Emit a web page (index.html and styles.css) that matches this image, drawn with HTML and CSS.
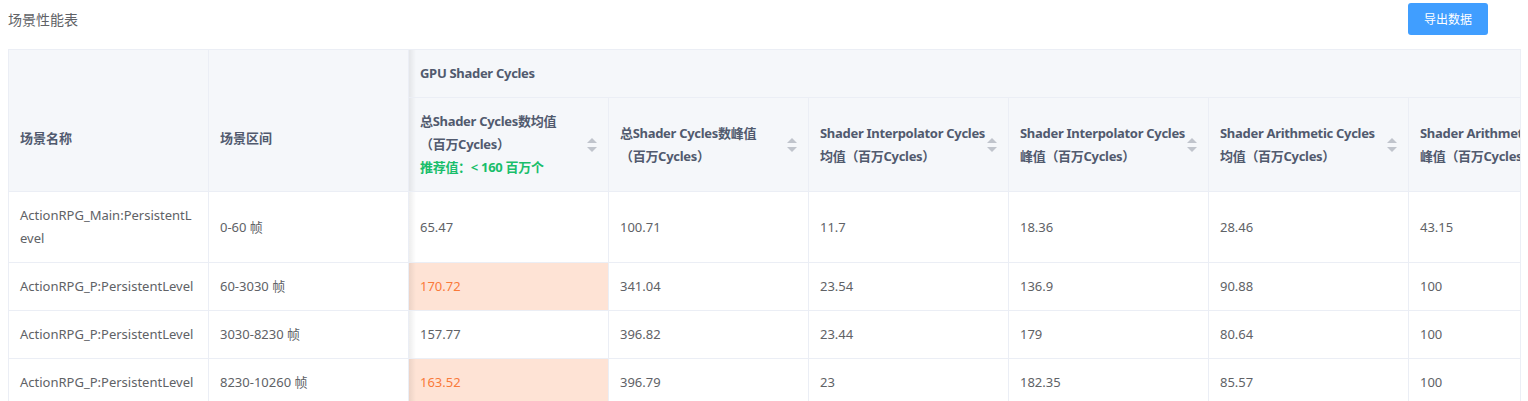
FILE: index.html
```html
<!DOCTYPE html>
<html lang="zh-CN">
<head>
<meta charset="utf-8">
<title>场景性能表</title>
<link rel="stylesheet" href="styles.css">
</head>
<body>
<div class="page">
  <div class="toolbar">
    <span class="title">场景性能表</span>
    <button class="btn-primary">导出数据</button>
  </div>
  <div class="table-wrap">
    <table class="perf">
      <colgroup>
        <col class="c"><col class="c"><col class="c"><col class="c"><col class="c"><col class="c"><col class="c"><col class="c"><col class="c">
      </colgroup>
      <thead>
        <tr class="h1">
          <th rowspan="2" class="fixed-h"><div class="cell">场景名称</div></th>
          <th rowspan="2" class="fixed-h"><div class="cell">场景区间</div></th>
          <th colspan="7" class="sh"><div class="cell">GPU Shader Cycles</div></th>
        </tr>
        <tr class="h2">
          <th class="sh"><div class="cell sortable"><span class="lbl">总Shader Cycles数均值<br>（百万Cycles）<br><span class="rec">推荐值：&lt; 160 百万个</span></span><span class="caret"><i class="up"></i><i class="down"></i></span></div></th>
          <th><div class="cell sortable"><span class="lbl">总Shader Cycles数峰值<br>（百万Cycles）</span><span class="caret"><i class="up"></i><i class="down"></i></span></div></th>
          <th><div class="cell sortable"><span class="lbl">Shader Interpolator Cycles<br>均值（百万Cycles）</span><span class="caret"><i class="up"></i><i class="down"></i></span></div></th>
          <th><div class="cell sortable"><span class="lbl">Shader Interpolator Cycles<br>峰值（百万Cycles）</span><span class="caret"><i class="up"></i><i class="down"></i></span></div></th>
          <th><div class="cell sortable"><span class="lbl">Shader Arithmetic Cycles<br>均值（百万Cycles）</span><span class="caret"><i class="up"></i><i class="down"></i></span></div></th>
          <th><div class="cell sortable"><span class="lbl">Shader Arithmetic Cycles<br>峰值（百万Cycles）</span><span class="caret"><i class="up"></i><i class="down"></i></span></div></th>
          <th><div class="cell sortable"><span class="lbl">Shader Load Store Cycles<br>均值（百万Cycles）</span><span class="caret"><i class="up"></i><i class="down"></i></span></div></th>
        </tr>
      </thead>
      <tbody>
        <tr>
          <td><div class="cell">ActionRPG_Main:PersistentL<br>evel</div></td>
          <td><div class="cell">0-60 帧</div></td>
          <td class="sh"><div class="cell">65.47</div></td>
          <td><div class="cell">100.71</div></td>
          <td><div class="cell">11.7</div></td>
          <td><div class="cell">18.36</div></td>
          <td><div class="cell">28.46</div></td>
          <td><div class="cell">43.15</div></td>
          <td><div class="cell">12.3</div></td>
        </tr>
        <tr>
          <td><div class="cell">ActionRPG_P:PersistentLevel</div></td>
          <td><div class="cell">60-3030 帧</div></td>
          <td class="sh warn"><div class="cell">170.72</div></td>
          <td><div class="cell">341.04</div></td>
          <td><div class="cell">23.54</div></td>
          <td><div class="cell">136.9</div></td>
          <td><div class="cell">90.88</div></td>
          <td><div class="cell">100</div></td>
          <td><div class="cell">30.1</div></td>
        </tr>
        <tr>
          <td><div class="cell">ActionRPG_P:PersistentLevel</div></td>
          <td><div class="cell">3030-8230 帧</div></td>
          <td class="sh"><div class="cell">157.77</div></td>
          <td><div class="cell">396.82</div></td>
          <td><div class="cell">23.44</div></td>
          <td><div class="cell">179</div></td>
          <td><div class="cell">80.64</div></td>
          <td><div class="cell">100</div></td>
          <td><div class="cell">28.9</div></td>
        </tr>
        <tr>
          <td><div class="cell">ActionRPG_P:PersistentLevel</div></td>
          <td><div class="cell">8230-10260 帧</div></td>
          <td class="sh warn"><div class="cell">163.52</div></td>
          <td><div class="cell">396.79</div></td>
          <td><div class="cell">23</div></td>
          <td><div class="cell">182.35</div></td>
          <td><div class="cell">85.57</div></td>
          <td><div class="cell">100</div></td>
          <td><div class="cell">29.4</div></td>
        </tr>
      </tbody>
    </table>
  </div>
</div>
</body>
</html>
```

FILE: styles.css
```css
* { box-sizing: border-box; }
html, body { margin: 0; padding: 0; background: #fff; }
body {
  font-family: "Noto Sans", "Noto Sans CJK SC", sans-serif;
  font-size: 13px;
  color: #606266;
}
.page { padding: 0 7px 0 8px; height: 401px; overflow: hidden; }
.toolbar {
  height: 38px;
  display: flex;
  align-items: center;
  justify-content: space-between;
  padding-right: 33px;
  margin-bottom: 11px;
}
.title { font-size: 14px; color: #606266; }
.btn-primary {
  width: 80px;
  height: 32px;
  border: none;
  border-radius: 3px;
  background: #409eff;
  color: #fff;
  font-family: inherit;
  font-size: 12px;
  padding: 0;
}
.table-wrap {
  width: 1513px;
  overflow: hidden;
  border-left: 1px solid #ebeef5;
  border-top: 1px solid #ebeef5;
  border-right: 1px solid #ebeef5;
}
.perf {
  border-collapse: separate;
  border-spacing: 0;
  table-layout: fixed;
  width: 1800px;
}
.perf col.c { width: 200px; }
.perf th, .perf td {
  padding: 12px 0;
  border-right: 1px solid #ebeef5;
  border-bottom: 1px solid #ebeef5;
  vertical-align: middle;
  text-align: left;
}
.perf th {
  background: #f5f7fa;
  color: #515a6e;
  font-weight: 700;
  letter-spacing: -0.3px;
}
.perf th.fixed-h { vertical-align: bottom; padding-bottom: 41px; letter-spacing: 0; }
.perf td { background: #fff; color: #606266; font-weight: 400; }
.cell {
  line-height: 23px;
  padding: 0 10px 0 11px;
  word-break: break-all;
}
.sortable { display: flex; align-items: center; }
.sortable .lbl { flex: 1; min-width: 0; white-space: nowrap; }
.caret {
  flex: none;
  width: 10px;
  height: 14px;
  margin-right: 1px;
  margin-left: 2px;
  display: flex;
  flex-direction: column;
  justify-content: space-between;
  align-items: center;
}
.caret i {
  display: block;
  width: 0; height: 0;
  border-left: 5px solid transparent;
  border-right: 5px solid transparent;
}
.caret .up { border-bottom: 5px solid #c0c4cc; }
.caret .down { border-top: 5px solid #c0c4cc; }
.rec { color: #19be6b; }
.perf .sh {
  background-image: linear-gradient(to right, rgba(0,0,0,0.07), rgba(0,0,0,0) 7px);
}
.perf td.warn { background-color: #fee3d5; color: #fa7a3a; }
```
